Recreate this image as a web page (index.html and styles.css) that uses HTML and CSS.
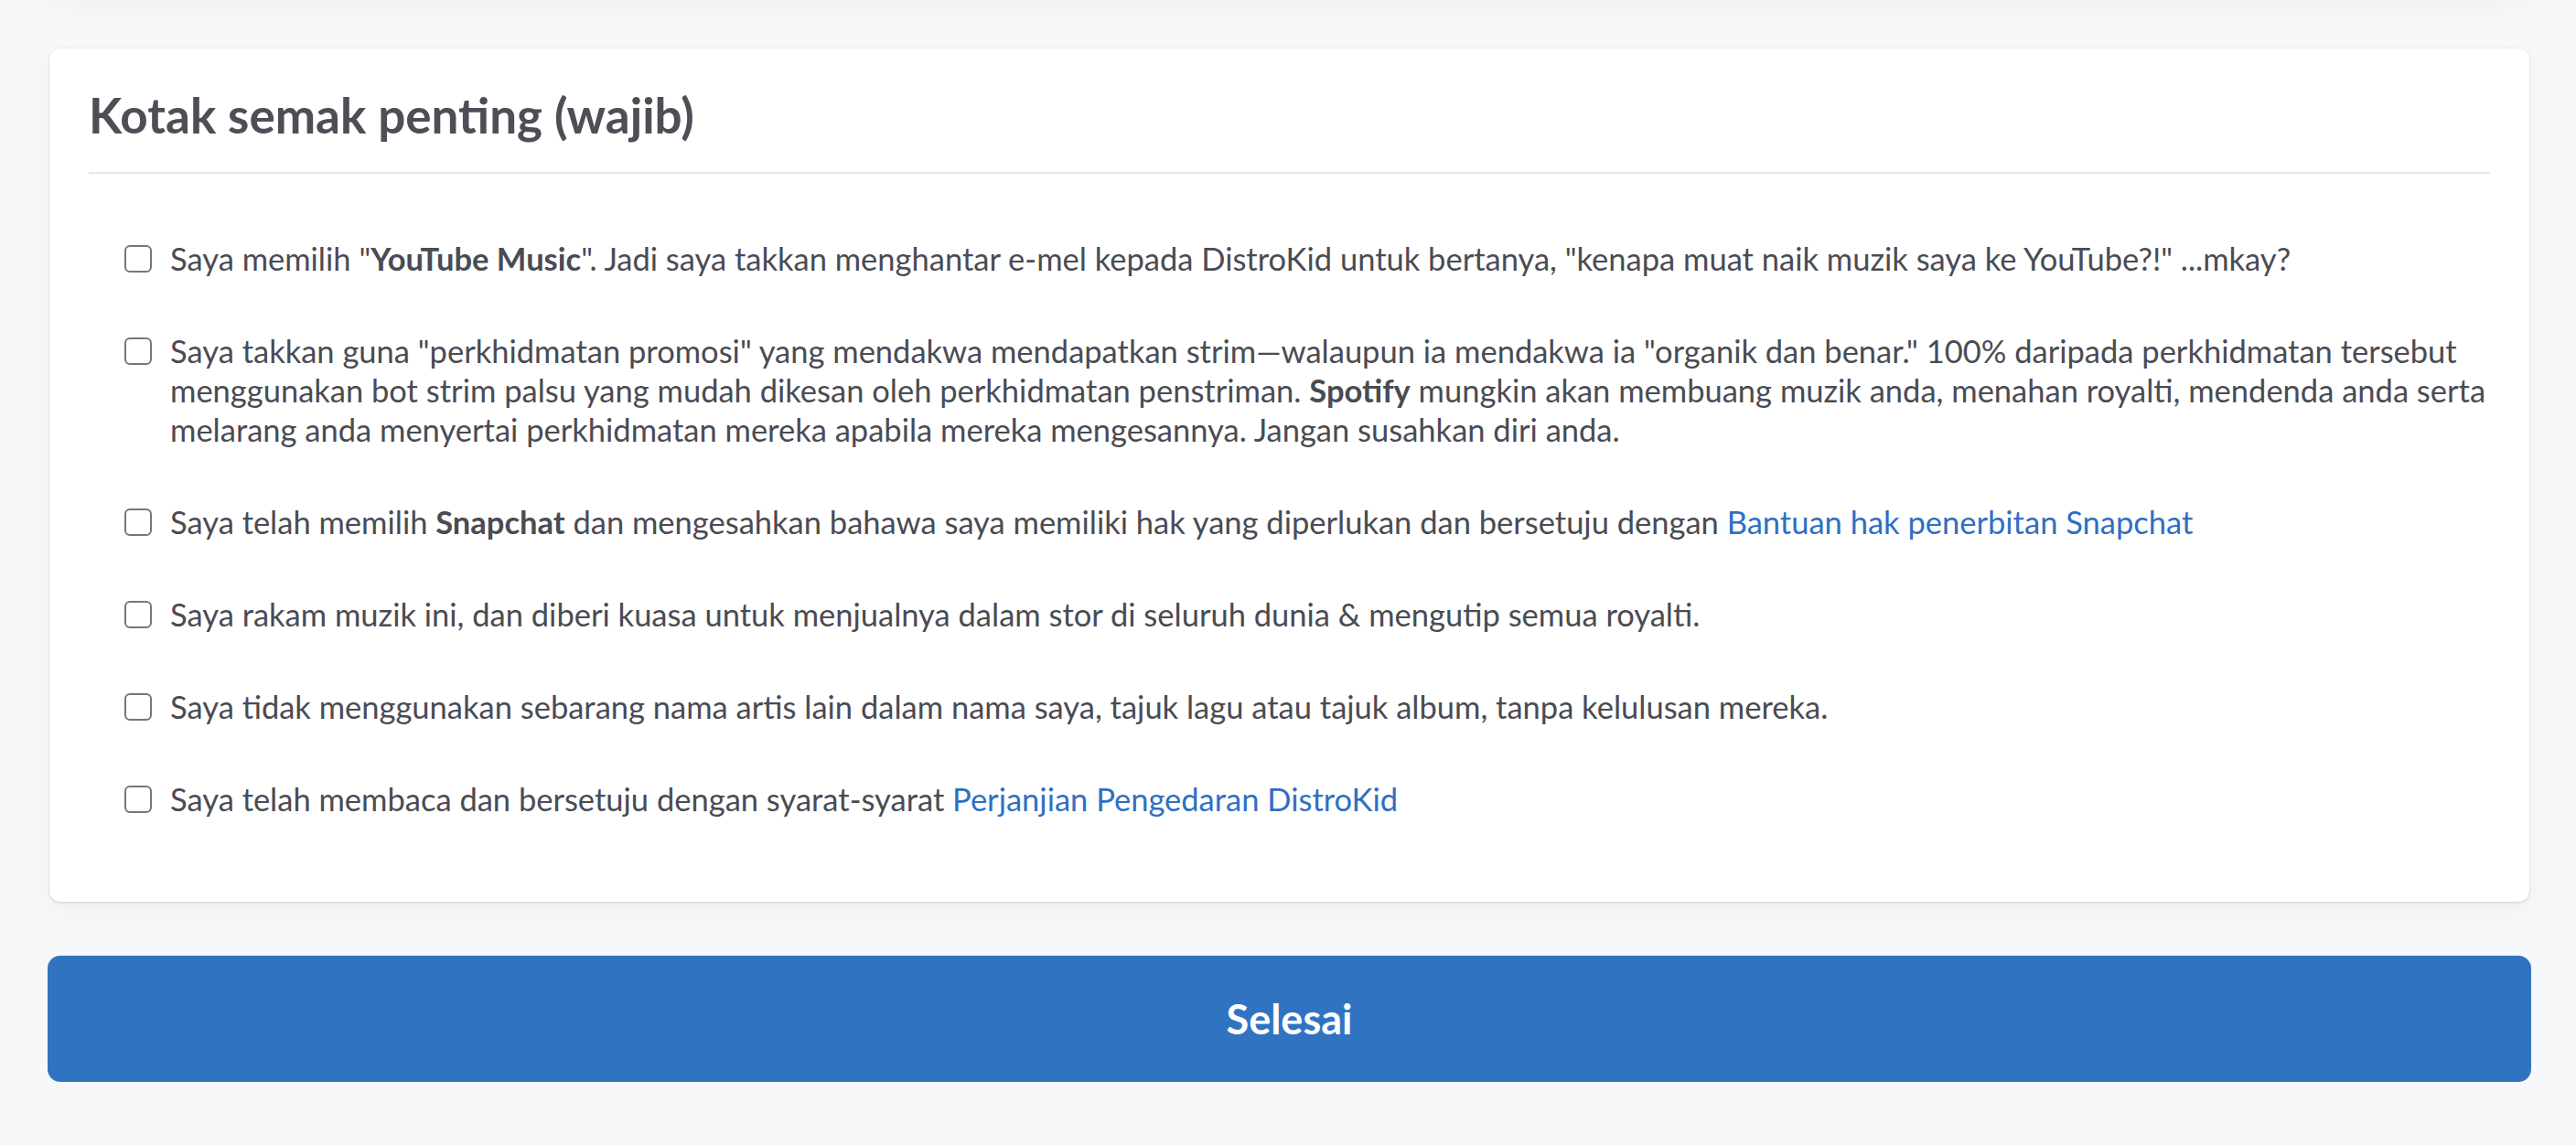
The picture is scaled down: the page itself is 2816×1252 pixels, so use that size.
FILE: index.html
```html
<!DOCTYPE html>
<html lang="ms">
<head>
    <meta charset="UTF-8">
    <meta name="viewport" content="width=device-width, initial-scale=1.0">
    <title>Kotak semak penting</title>
    <link rel="stylesheet" href="styles.css">
</head>
<body>
    <div class="page">
        <!-- bottom of the previous section, scrolled off the top -->
        <div class="card card-prev"></div>

        <!-- Required checkboxes -->
        <div class="card">
            <h2 class="card-title">Kotak semak penting (wajib)</h2>

            <ul class="checklist">
                <li class="check-item">
                    <input type="checkbox" id="c1">
                    <label for="c1">Saya memilih "<b>YouTube Music</b>". Jadi saya takkan menghantar e-mel kepada DistroKid untuk bertanya, "kenapa muat naik muzik saya ke YouTube?!" ...mkay?</label>
                </li>
                <li class="check-item">
                    <input type="checkbox" id="c2">
                    <label for="c2">Saya takkan guna "perkhidmatan promosi" yang mendakwa mendapatkan strim—walaupun ia mendakwa ia "organik dan benar." 100% daripada perkhidmatan tersebut menggunakan bot strim palsu yang mudah dikesan oleh perkhidmatan penstriman. <b>Spotify</b> mungkin akan membuang muzik anda, menahan royalti, mendenda anda serta melarang anda menyertai perkhidmatan mereka apabila mereka mengesannya. Jangan susahkan diri anda.</label>
                </li>
                <li class="check-item">
                    <input type="checkbox" id="c3">
                    <label for="c3">Saya telah memilih <b>Snapchat</b> dan mengesahkan bahawa saya memiliki hak yang diperlukan dan bersetuju dengan <a href="#">Bantuan hak penerbitan Snapchat</a></label>
                </li>
                <li class="check-item">
                    <input type="checkbox" id="c4">
                    <label for="c4">Saya rakam muzik ini, dan diberi kuasa untuk menjualnya dalam stor di seluruh dunia &amp; mengutip semua royalti.</label>
                </li>
                <li class="check-item">
                    <input type="checkbox" id="c5">
                    <label for="c5">Saya tidak menggunakan sebarang nama artis lain dalam nama saya, tajuk lagu atau tajuk album, tanpa kelulusan mereka.</label>
                </li>
                <li class="check-item">
                    <input type="checkbox" id="c6">
                    <label for="c6">Saya telah membaca dan bersetuju dengan syarat-syarat <a href="#">Perjanjian Pengedaran DistroKid</a></label>
                </li>
            </ul>
        </div>

        <button type="button" class="btn-done">Selesai</button>
    </div>
</body>
</html>
```

FILE: styles.css
```css
* { box-sizing: border-box; }
body { margin: 0; background-color: #f7f8fa; color: #4a4b53; font-family: Lato, "Open Sans", sans-serif; }
.page { padding: 0 49px 70px 52px; overflow: hidden; }

.card { margin: 57px 2px 0; background-color: #fff; border-radius: 12px; padding: 41px 43px 33px; box-shadow: 0 0 0 1px rgba(0, 0, 0, 0.04), 0 2px 3px rgba(0, 0, 0, 0.08), 0 8px 30px rgba(0, 0, 0, 0.04); }
.card-prev { height: 200px; margin-top: -204px; padding: 0; }

.card-title { margin: 0; padding-bottom: 30px; border-bottom: 2px solid #e6e7ea; font-size: 53px; line-height: 64px; font-weight: 700; color: #4d4e56; }

.checklist { list-style: none; margin: 0 -38px 0 0; padding: 71px 0 0 39px; }
.check-item { display: flex; align-items: flex-start; gap: 20px; margin-bottom: 58px; font-size: 34.5px; line-height: 43px; }
.check-item input { appearance: none; -webkit-appearance: none; flex: none; width: 30px; height: 30px; margin: 7px 0 0; border: 2px solid #77777a; border-radius: 6px; background-color: #fff; }
.check-item label { flex: 1; }
.check-item b { font-weight: 700; }
.check-item a { color: #2f6fc3; text-decoration: none; }

.btn-done { display: block; width: 100%; height: 138px; margin-top: 59px; border: none; border-radius: 14px; background-color: #3074c1; color: #fff; font-family: Lato, sans-serif; font-size: 45px; font-weight: 700; cursor: pointer; }
```
